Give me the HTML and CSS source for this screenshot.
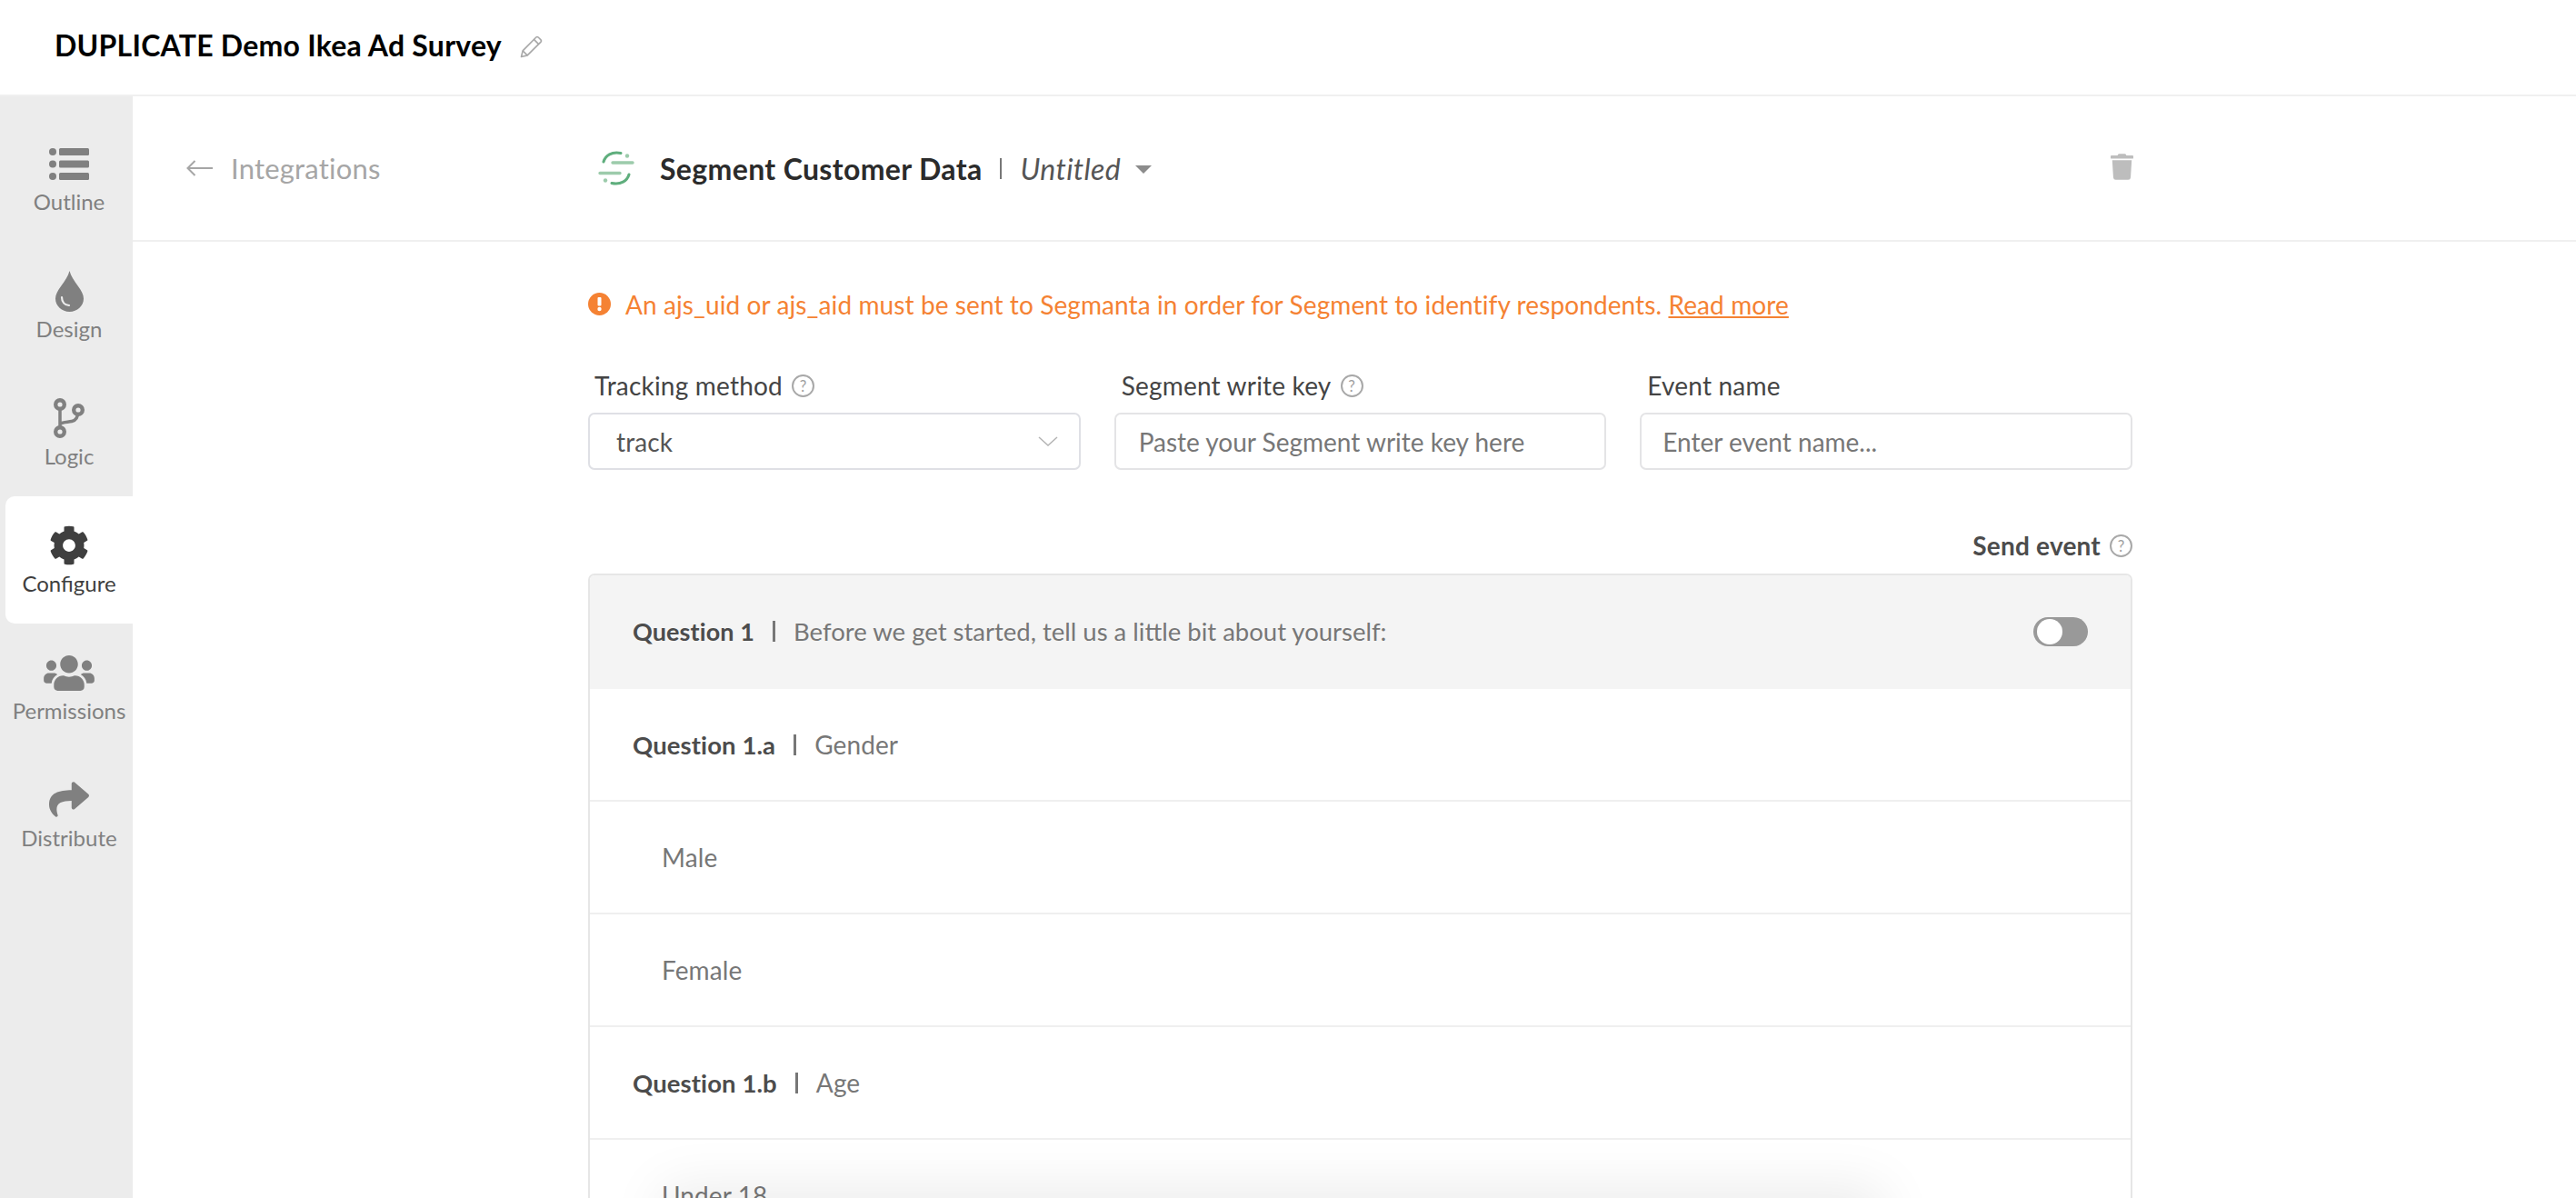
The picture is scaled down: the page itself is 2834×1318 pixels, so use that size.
FILE: index.html
```html
<!DOCTYPE html>
<html lang="en">
<head>
    <meta charset="UTF-8">
    <meta name="viewport" content="width=device-width, initial-scale=1.0">
    <title>DUPLICATE Demo Ikea Ad Survey</title>
    <link rel="stylesheet" href="styles.css">
</head>
<body>
    <!-- Top bar -->
    <header class="topbar">
        <h1 class="survey-title">DUPLICATE Demo Ikea Ad Survey</h1>
        <svg class="edit-icon" viewBox="0 0 25 25" fill="none" stroke="#a8a8a8" stroke-width="1.6" stroke-linejoin="round">
            <path d="M1.5 23.5l1.6-6.6L17.6 2.2a2 2 0 0 1 2.8 0l2.4 2.4a2 2 0 0 1 0 2.8L8.2 21.9z"/>
            <path d="M15.4 4.4l5.2 5.2M3.1 16.9l5.1 5"/>
        </svg>
    </header>

    <div class="workspace">
        <!-- Side navigation -->
        <nav class="sidebar">
            <a class="nav-item">
                <svg class="nav-icon icon-outline" viewBox="0 0 44 35" fill="#808080">
                    <circle cx="4" cy="4" r="4"/><rect x="11" y="0" width="33" height="8" rx="1.5"/>
                    <circle cx="4" cy="17.5" r="4"/><rect x="11" y="13.5" width="33" height="8" rx="1.5"/>
                    <circle cx="4" cy="31" r="4"/><rect x="11" y="27" width="33" height="8" rx="1.5"/>
                </svg>
                <span>Outline</span>
            </a>
            <a class="nav-item">
                <svg class="nav-icon icon-drop" viewBox="0 0 31 45">
                    <path fill="#808080" d="M15.5 0C17 6 20.500 10.500 25 17c3.500 5 6 9 6 13.500C31 38.500 24 45 15.500 45S0 38.500 0 30.500C0 26 2.500 22 6 17 10.500 10.500 14 6 15.500 0z"/>
                    <path fill="none" stroke="#ececec" stroke-width="2.200" stroke-linecap="round" d="M7 29c0 5 3 8.500 8 9"/>
                </svg>
                <span>Design</span>
            </a>
            <a class="nav-item">
                <svg class="nav-icon icon-logic" viewBox="0 0 34 44" fill="none">
                    <path stroke="#808080" stroke-width="3.500" d="M7 7v30M7 28.500c3-2.500 8-2 13-3s7-5 7-12"/>
                    <circle cx="7" cy="7" r="4.800" fill="#ececec" stroke="#808080" stroke-width="4.400"/>
                    <circle cx="27" cy="13" r="4.800" fill="#ececec" stroke="#808080" stroke-width="4.400"/>
                    <circle cx="7" cy="37" r="4.800" fill="#ececec" stroke="#808080" stroke-width="4.400"/>
                </svg>
                <span>Logic</span>
            </a>
            <a class="nav-item active">
                <svg class="nav-icon icon-gear" viewBox="0 0 512 512" fill="#3f3f3f">
                    <path d="M487.400 315.700l-42.600-24.600c4.300-23.200 4.300-47 0-70.200l42.600-24.600c4.900-2.800 7.100-8.600 5.500-14-11.100-35.600-30-67.800-54.700-94.600-3.800-4.100-10-5.100-14.800-2.300L380.800 110c-17.900-15.400-38.500-27.300-60.800-35.100V25.800c0-5.600-3.900-10.500-9.400-11.700-36.700-8.200-74.300-7.800-109.200 0-5.500 1.200-9.400 6.100-9.400 11.700V75c-22.200 7.900-42.800 19.800-60.800 35.100L88.700 85.500c-4.900-2.800-11-1.900-14.800 2.300-24.700 26.700-43.600 58.900-54.700 94.600-1.700 5.400.6 11.200 5.500 14L67.300 221c-4.300 23.200-4.300 47 0 70.200l-42.600 24.600c-4.900 2.800-7.100 8.600-5.500 14 11.100 35.600 30 67.800 54.700 94.600 3.800 4.100 10 5.100 14.800 2.300l42.600-24.600c17.900 15.400 38.500 27.300 60.800 35.100v49.200c0 5.600 3.900 10.500 9.400 11.700 36.700 8.200 74.300 7.800 109.200 0 5.500-1.200 9.400-6.100 9.400-11.700v-49.200c22.200-7.900 42.800-19.800 60.800-35.100l42.600 24.600c4.900 2.800 11 1.900 14.800-2.300 24.700-26.700 43.600-58.900 54.700-94.600 1.500-5.500-.7-11.300-5.600-14.100zM256 336c-44.100 0-80-35.900-80-80s35.900-80 80-80 80 35.900 80 80-35.900 80-80 80z"/>
                </svg>
                <span>Configure</span>
            </a>
            <a class="nav-item">
                <svg class="nav-icon icon-users" viewBox="0 32 640 448" fill="#808080">
                    <path d="M96 224c35.300 0 64-28.700 64-64s-28.700-64-64-64-64 28.700-64 64 28.700 64 64 64zm448 0c35.300 0 64-28.700 64-64s-28.700-64-64-64-64 28.700-64 64 28.700 64 64 64zm32 32h-64c-17.600 0-33.500 7.100-45.100 18.600 40.300 22.100 68.900 62 75.100 109.400h66c17.700 0 32-14.300 32-32v-32c0-35.300-28.700-64-64-64zm-256 0c61.900 0 112-50.100 112-112S381.900 32 320 32 208 82.100 208 144s50.100 112 112 112zm76.800 32h-8.300c-20.800 10-43.900 16-68.500 16s-47.600-6-68.500-16h-8.300C179.600 288 128 339.600 128 403.200V432c0 26.500 21.500 48 48 48h288c26.500 0 48-21.500 48-48v-28.800c0-63.600-51.600-115.200-115.200-115.200zm-223.700-13.400C161.500 263.100 145.600 256 128 256H64c-35.300 0-64 28.700-64 64v32c0 17.700 14.300 32 32 32h65.900c6.300-47.400 34.900-87.300 75.200-109.400z"/>
                </svg>
                <span>Permissions</span>
            </a>
            <a class="nav-item">
                <svg class="nav-icon icon-share" viewBox="0 30 512 452" fill="#808080">
                    <path d="M503.691 189.836L327.687 37.851C312.281 24.546 288 35.347 288 56.015v80.053C127.371 137.907 0 170.100 0 322.326c0 61.441 39.581 122.309 83.333 154.132 13.653 9.931 33.111-2.533 28.077-18.631C66.066 312.814 132.917 274.316 288 272.085V360c0 20.700 24.300 31.453 39.687 18.164l176.004-152c11.071-9.562 11.086-26.753 0-36.328z"/>
                </svg>
                <span>Distribute</span>
            </a>
        </nav>

        <main class="content">
            <!-- Integration header -->
            <div class="integration-bar">
                <a class="back-link">
                    <svg class="back-arrow" viewBox="0 0 29 18" fill="none" stroke="#a6a6a6" stroke-width="2">
                        <path d="M29 9H1.500M9.500 1L1.500 9l8 8"/>
                    </svg>
                    Integrations
                </a>
                <div class="integration-head">
                    <div class="integration-name">
                        <svg class="segment-logo" viewBox="0 0 40 38" fill="none" stroke-linecap="round">
                            <path stroke="#5fae7d" stroke-width="3" d="M25 2.500C15 .5 8 5 6 12"/>
                            <path stroke="#5fae7d" stroke-width="3" d="M15 35.500c10 2 17-2.500 19-9.500"/>
                            <path stroke="#9ccbab" stroke-width="3.400" d="M16 13h22M2 24.500h22"/>
                            <circle cx="32" cy="5.500" r="2.200" fill="#9ccbab"/>
                            <circle cx="8" cy="32.500" r="2.200" fill="#9ccbab"/>
                        </svg>
                        <strong>Segment Customer Data</strong>
                        <i class="bar-sep"></i>
                        <em>Untitled</em>
                        <i class="caret"></i>
                    </div>
                    <svg class="trash-icon" viewBox="0 0 448 512" fill="#bdbdbd">
                        <path d="M432 32H312l-9.400-18.700A24 24 0 0 0 281.100 0H166.800a23.720 23.720 0 0 0-21.400 13.300L136 32H16A16 16 0 0 0 0 48v32a16 16 0 0 0 16 16h416a16 16 0 0 0 16-16V48a16 16 0 0 0-16-16zM53.200 467a48 48 0 0 0 47.900 45h245.800a48 48 0 0 0 47.900-45L416 128H32z"/>
                    </svg>
                </div>
            </div>

            <section class="form-area">
                <p class="alert">
                    <svg class="alert-icon" viewBox="0 0 25 25">
                        <circle cx="12.500" cy="12.500" r="12.500" fill="#f58233"/>
                        <rect x="10.500" y="5" width="4" height="9.500" rx="1" fill="#fff"/>
                        <circle cx="12.500" cy="18" r="2.200" fill="#fff"/>
                    </svg>
                    <span>An ajs_uid or ajs_aid must be sent to Segmanta in order for Segment to identify respondents. <a class="alert-link">Read more</a></span>
                </p>

                <div class="field-row">
                    <div class="field">
                        <label class="field-label">Tracking method <i class="help">?</i></label>
                        <div class="select-box">
                            <span>track</span>
                            <svg class="chevron" viewBox="0 0 22 11" fill="none" stroke="#b4b4b4" stroke-width="1.500"><path d="M1 1l10 9 10-9"/></svg>
                        </div>
                    </div>
                    <div class="field">
                        <label class="field-label">Segment write key <i class="help">?</i></label>
                        <input class="text-input" placeholder="Paste your Segment write key here">
                    </div>
                    <div class="field">
                        <label class="field-label">Event name</label>
                        <input class="text-input input-tight" placeholder="Enter event name...">
                    </div>
                </div>

                <div class="send-head">Send event <i class="help">?</i></div>

                <div class="question-table">
                    <div class="q-row q-main">
                        <b>Question 1</b><i class="q-sep"></i><span>Before we get started, tell us a little bit about yourself:</span>
                        <i class="toggle"></i>
                    </div>
                    <div class="q-row"><b>Question 1.a</b><i class="q-sep"></i><span>Gender</span></div>
                    <div class="q-row q-option"><span>Male</span></div>
                    <div class="q-row q-option"><span>Female</span></div>
                    <div class="q-row"><b>Question 1.b</b><i class="q-sep"></i><span>Age</span></div>
                    <div class="q-row q-option"><span>Under 18</span></div>
                </div>
            </section>
        </main>
    </div>

    <!-- Shadow of the bar that sits below the fold -->
    <div class="bottom-shadow"></div>
</body>
</html>
```

FILE: styles.css
```css
* {
    box-sizing: border-box;
}

html, body {
    height: 100%;
    margin: 0;
    overflow: hidden;
}

body {
    display: flex;
    flex-direction: column;
    font-family: 'Lato', sans-serif;
    font-size: 28px;
    letter-spacing: 0.1px;
    color: #444;
    background-color: #fff;
}

/* Top bar */
.topbar {
    display: flex;
    align-items: center;
    flex: 0 0 106px;
    padding: 0 0 6px 60px;
    border-bottom: 2px solid #f0f0f0;
}

.survey-title {
    margin: 0;
    font-size: 32px;
    font-weight: 700;
    letter-spacing: 0.23px;
    color: #000;
}

.edit-icon {
    width: 25px;
    height: 25px;
    margin-left: 20px;
    margin-top: 4px;
}

.workspace {
    display: flex;
    flex: 1;
    min-height: 0;
}

/* Sidebar */
.sidebar {
    flex: 0 0 146px;
    padding: 20px 0 0 6px;
    background-color: #ececec;
}

.nav-item {
    display: flex;
    flex-direction: column;
    align-items: center;
    justify-content: flex-end;
    height: 140px;
    padding-bottom: 29px;
    font-size: 24px;
    letter-spacing: 0;
    line-height: 30px;
    color: #808080;
}

.nav-item.active {
    color: #3f3f3f;
    background-color: #fff;
    border-radius: 10px 0 0 10px;
}

.nav-icon {
    display: block;
    margin-bottom: 10px;
}

.icon-outline { width: 44px; height: 35px; margin-bottom: 9px; }
.icon-drop { width: 31px; height: 45px; margin-bottom: 4px; }
.icon-logic { width: 34px; height: 44px; margin-bottom: 5px; }
.icon-gear { width: 44px; height: 44px; margin-bottom: 5px; }
.icon-users { width: 56px; height: 39px; margin-bottom: 7px; }
.icon-share { width: 44px; height: 39px; margin-bottom: 8px; }

/* Content */
.content {
    flex: 1;
    min-width: 0;
}

.integration-bar {
    display: flex;
    align-items: center;
    height: 160px;
    padding-left: 59px;
    border-bottom: 2px solid #f0f0f0;
}

.back-link {
    display: flex;
    align-items: center;
    gap: 20px;
    width: 442px;
    font-size: 31px;
    letter-spacing: 0.2px;
    color: #a6a6a6;
}

.back-arrow {
    width: 29px;
    height: 18px;
}

.integration-head {
    display: flex;
    align-items: center;
    justify-content: space-between;
    width: 1700px;
    padding-left: 11px;
}

.integration-name {
    display: flex;
    align-items: center;
    font-size: 32px;
    letter-spacing: 0.35px;
    color: #2b2b2b;
}

.segment-logo {
    width: 40px;
    height: 38px;
    margin-right: 28px;
}

.integration-name em {
    color: #555;
}

.bar-sep {
    width: 2px;
    height: 23px;
    margin: 0 20px;
    background-color: #777;
}

.caret {
    width: 0;
    height: 0;
    margin-left: 16px;
    margin-top: 3px;
    border-style: solid;
    border-width: 9px 9px 0;
    border-color: #8c8c8c transparent transparent;
}

.trash-icon {
    width: 25px;
    height: 29px;
    margin-top: -4px;
}

.form-area {
    width: 1699px;
    margin-left: 501px;
}

.alert {
    display: flex;
    align-items: center;
    gap: 16px;
    height: 25px;
    margin: 56px 0 0;
    color: #f58233;
}

.alert-icon {
    width: 25px;
    height: 25px;
    flex: none;
}

.alert-link {
    text-decoration: underline;
}

.field-row {
    display: grid;
    grid-template-columns: repeat(3, 1fr);
    gap: 37px;
    margin-top: 62px;
}

.field-label {
    display: flex;
    align-items: center;
    gap: 10px;
    height: 30px;
    padding-left: 7px;
    margin-bottom: 15px;
    letter-spacing: 0.2px;
    color: #444;
}

.field:nth-child(2) .field-label { padding-left: 8px; }
.field:nth-child(3) .field-label { padding-left: 8px; }

.help {
    display: inline-block;
    width: 25px;
    height: 25px;
    border: 2px solid #a8a8a8;
    border-radius: 50%;
    font-size: 17px;
    font-style: normal;
    font-weight: 400;
    letter-spacing: 0;
    line-height: 21px;
    text-align: center;
    color: #a0a0a0;
}

.select-box,
.text-input {
    width: 100%;
    height: 63px;
    border: 2px solid #e4e4e6;
    border-radius: 7px;
    background-color: #fff;
    font-family: inherit;
    font-size: 28px;
    color: #555;
}

.select-box {
    display: flex;
    align-items: center;
    justify-content: space-between;
    padding: 0 23px 0 29px;
    border-color: #dfe0e5;
}

.chevron {
    width: 22px;
    height: 11px;
}

.text-input {
    padding: 0 25px;
    outline: none;
}

.input-tight {
    padding: 0 23px;
}

.text-input::placeholder {
    color: #777;
    opacity: 1;
}

.send-head {
    display: flex;
    align-items: center;
    justify-content: flex-end;
    gap: 10px;
    height: 30px;
    margin-top: 68px;
    margin-bottom: 16px;
    font-weight: 700;
    letter-spacing: 0.2px;
    color: #4c4c4c;
}

/* Question list */
.question-table {
    border: 2px solid #e6e6e6;
    border-radius: 7px 7px 0 0;
}

.q-row {
    display: flex;
    align-items: center;
    height: 124px;
    padding: 0 47px;
    border-bottom: 2px solid #efefef;
    color: #777;
}

.q-row b {
    font-size: 27.5px;
    color: #4c4c4c;
}

.q-main {
    height: 125px;
    padding-bottom: 2px;
    background-color: #f4f4f4;
    border-bottom: none;
    border-radius: 5px 5px 0 0;
}

.q-main b {
    font-size: 27px;
}

.q-main span {
    font-size: 27.5px;
    letter-spacing: 0;
}

.q-sep {
    width: 3px;
    height: 23px;
    margin: 0 20px;
    background-color: #777;
}

.q-option {
    padding-left: 79px;
}

.toggle {
    position: relative;
    width: 60px;
    height: 32px;
    margin-left: auto;
    border-radius: 16px;
    background-color: #999;
}

.toggle::after {
    content: '';
    position: absolute;
    left: 4px;
    top: 2px;
    width: 28px;
    height: 28px;
    border-radius: 50%;
    background-color: #fff;
}

/* Shadow from off-screen bar */
.bottom-shadow {
    position: absolute;
    left: 740px;
    bottom: -60px;
    width: 1320px;
    height: 60px;
    box-shadow: 0 0 60px 12px rgba(0, 0, 0, 0.08);
}
```
